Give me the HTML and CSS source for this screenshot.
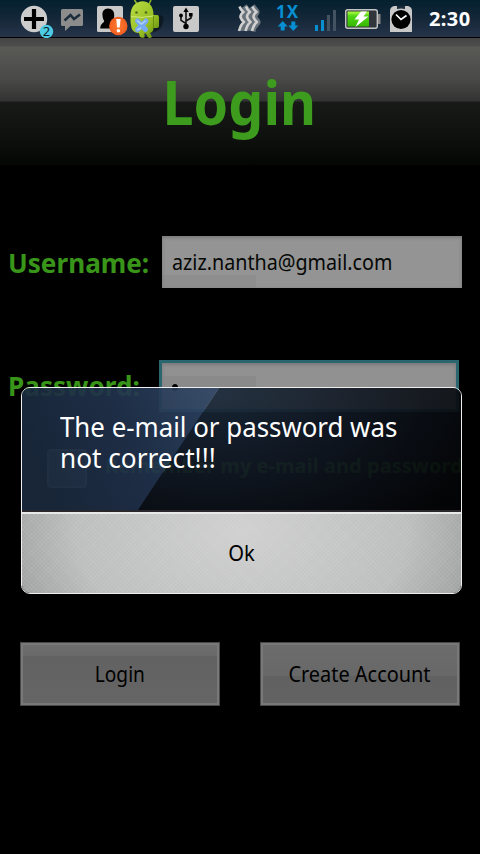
FILE: index.html
```
<!DOCTYPE html>
<html lang="en">
<head>
<meta charset="utf-8">
<title>Login</title>
<link rel="stylesheet" href="styles.css">
</head>
<body>
<div class="screen">
  <div class="status">
    <svg class="icons" width="420" height="38" viewBox="0 0 420 38" aria-hidden="true">
      <defs>
        <linearGradient id="bat" x1="0" x2="0" y1="0" y2="1"><stop offset="0" stop-color="#b4ff45"/><stop offset=".3" stop-color="#50d516"/><stop offset="1" stop-color="#35b800"/></linearGradient>
        <linearGradient id="bot" x1="0" x2="1" y1="0" y2="1"><stop offset="0" stop-color="#b8dc45"/><stop offset=".6" stop-color="#98c022"/><stop offset="1" stop-color="#5d8510"/></linearGradient>
        <radialGradient id="warn"><stop offset="0" stop-color="#ff7c31"/><stop offset="1" stop-color="#f15e20"/></radialGradient>
      </defs>
      <circle cx="34" cy="19" r="13.2" fill="#ccc"/>
      <path d="M34 9v20M24 19h20" stroke="#000" stroke-width="4.2"/>
      <circle cx="46.500" cy="31.500" r="6.700" fill="#4dcbe3"/>
      <path d="M61 10.500q0-1.500 1.500-1.500h19q1.500 0 1.500 1.500v14q0 1.500-1.500 1.500h-11l-5.500 5v-5h-2.500q-1.500 0-1.500-1.500z" fill="#8c8c8c"/>
      <path d="M64.500 20.500l6-5.500 3.500 4 6-4.500" fill="none" stroke="#1c2e3d" stroke-width="2.600"/>
      <rect x="97" y="6" width="26" height="26" rx="1.500" fill="#c9c9c9"/>
      <path d="M108 8.500c-4 0-6 3-5.500 7 .2 3 1 4 1.700 5.500 0 2-3.800 2-4 7.500h17c-.2-5.500-4.500-5.500-4.500-7.500 1-1.500 1.500-3 1.500-5.500.3-4-2-7-6.200-7z" fill="#000"/>
      <circle cx="118.300" cy="26" r="9.200" fill="url(#warn)"/>
      <path d="M116.200 19h4.400l-.9 8.500h-2.600z" fill="#fff"/><circle cx="118.400" cy="30.800" r="1.800" fill="#fff"/>
      <path d="M150 33q15-2 13-17l-4-1z" fill="#0a1319" opacity=".7"/>
      <path d="M137 4l-2.500-4M149 4l2-4" stroke="#91b52c" stroke-width="1.600"/>
      <path d="M130.500 16C130-3 154-4 153.500 15h3.500q2 0 2 2v9q0 2-2 2h-3.500q0 4-3.500 5l2 4q-2 1.500-4 .5l-2-4h-1.500v4q-3 .8-4.500-.5l-1-4q-6 0-7.500-5l-1-6z" fill="url(#bot)"/>
      <path d="M131 16.500q11 2 22-.5" fill="none" stroke="#d0e47b"/>
      <circle cx="136.500" cy="12.500" r="1.300" fill="#556b1c"/><circle cx="146" cy="12.500" r="1.300" fill="#556b1c"/>
      <path d="M153.500 16v12" stroke="#668c12"/>
      <path d="M137.500 21l8 8.500M146 21l-8.500 8.500" stroke="#77aaf2" stroke-width="5" stroke-linecap="round"/>
      <path d="M137 20.500l4.500 3.500 4.500-3.500M137 30l4-2" stroke="#b3d3fb" stroke-width="1.500" fill="none"/>
      <rect x="173" y="6" width="26" height="26" rx="2" fill="#c9c9c9"/>
      <g fill="none" stroke="#111" stroke-width="1.600"><path d="M186 26V11M186 23.500l-5-3.200V16M186 21l5-3v-3"/></g>
      <path d="M186 7.500l-2.600 4.500h5.200zM189 13h3.600v3.600h-3.600z"/><circle cx="181" cy="15.500" r="1.900"/><circle cx="186" cy="26.500" r="2.700"/>
      <path d="M243 7l4 5-3 5 4 5-4 5v4M251 7l4 5-3 5 4 5-4 5-1 4" fill="none" stroke="#68727a" stroke-width="9" stroke-linejoin="round"/>
      <path d="M239.500 6.500q1 3 4 5.500-3 2-3 5 1 3 3.500 5-3 2-5 9M246 6.500q1 3 4 5.500-3 2-3 5 1 3 3.500 5-3 2-5 9M252.500 6.500q1 3 4 5.500-3 2-3 5 1 3 3.500 5-3 2-5 9" fill="none" stroke="#d0d0d0" stroke-width="2.600" stroke-linejoin="round"/>
      <path d="M282.700 21l5 5.500h-3v4h-4v-4h-3zM293.300 31l-5-5.500h3v-4h4v4h3z" fill="#078fd2"/>
      <path d="M315 25h3v6h-3zM321 20h3v11h-3z" fill="#078fd2"/><path d="M327 15h3v16h-3zM333 10h3v21h-3z" fill="#445361"/>
      <rect x="345.700" y="9.700" width="31.600" height="18.600" rx="2" fill="#30363b" stroke="#c3c3c3" stroke-width="1.400"/>
      <path d="M378 14h2.500v10H378z" fill="#878787"/>
      <rect x="347.500" y="11.500" width="21.500" height="15" fill="url(#bat)"/>
      <path d="M361 11.500l-6.500 8h4.500l-3.500 7.500 13-10.500h-5l3.500-5z" fill="#fff"/>
      <path d="M390 32V11q0-4 4-5h14q4 1 4 5v21z" fill="#c9c9c9"/>
      <path d="M397 6h8v3q-4-1-8 0z" fill="#1a2c3a"/>
      <circle cx="401" cy="19.500" r="9.600" fill="#000"/>
      <path d="M396 14.500l5 5 5.500-4" stroke="#fff" stroke-width="1.700" fill="none"/>
    </svg>
    <span class="badge">2</span>
    <span class="net">1X</span>
    <span class="clock">2:30</span>
  </div>

  <header class="header"><h1 class="title"><span class="fit fit-title">Login</span></h1></header>

  <main class="form">
    <div class="row">
      <label class="label"><span class="fit fit-user">Username:</span></label>
      <div class="input input-user"><span class="fit fit-mail">aziz.nantha@gmail.com</span></div>
    </div>
    <div class="row row-pass">
      <label class="label label-pass"><span class="fit fit-pass">Password:</span></label>
      <div class="input input-focus"><span class="dot"></span></div>
    </div>
    <div class="remember"><span class="check"></span><span class="fit fit-rem">Remember my e-mail and password</span></div>
    <div class="actions">
      <div class="button button-login"><span class="fit fit-login">Login</span></div>
      <div class="button button-create"><span class="fit fit-create">Create Account</span></div>
    </div>
  </main>

  <section class="dialog">
    <div class="message"><p class="text"><span class="fit fit-l1">The e-mail or password was</span><br><span class="fit fit-l2">not correct!!!</span></p></div>
    <div class="ok"><span class="fit fit-ok">Ok</span></div>
  </section>
</div>
</body>
</html>
```
FILE: styles.css
```
* { box-sizing: border-box; }
body { margin: 0; background: #000; font-family: "Noto Sans", "Open Sans", sans-serif; }
.screen { position: relative; width: 480px; height: 854px; overflow: hidden; background: #000; }
.fit { display: inline-block; white-space: nowrap; transform-origin: 0 50%; }

.status { position: relative; display: flex; align-items: center; height: 38px; background: linear-gradient(#04202f, #142738 50%, #27344a); border-bottom: 1px solid #000; color: #fff; }
.icons { flex: none; }
.badge { position: absolute; left: 42px; top: 24px; width: 9px; font-size: 13px; line-height: 15px; text-align: center; color: #06222a; }
.net { position: absolute; left: 276px; top: 2px; font-size: 17px; font-weight: 700; line-height: 20px; letter-spacing: 1px; color: #078fd2; }
.clock { margin-left: 9px; font-size: 20px; font-weight: 700; line-height: 38px; letter-spacing: .4px; white-space: nowrap; }

.header { height: 128px; padding-top: 20px; text-align: center; background: linear-gradient(#444 0, #4d4d4c 8px, #595a56 9px, #4a4a49 40px, #333 63px, #181a18 64px, #0e110d 98px, #030602 127px, #000 128px); }
.title { margin: 0; font-size: 61px; line-height: 88px; font-weight: 700; color: #3d9c1e; }
.fit-title { transform-origin: 50% 50%; transform: translateX(-1px) scaleX(.91); }

.form { padding-top: 70px; }
.row { display: flex; height: 52px; }
.row-pass { margin-top: 72px; }
.label { flex: none; width: 162px; padding-left: 8px; font-size: 26px; line-height: 54px; font-weight: 700; color: #399519; }
.label-pass { width: 159px; line-height: 52px; }
.fit-user, .fit-pass { transform: scaleX(1.005); }
.input { width: 300px; padding-left: 10px; background: #949494; box-shadow: inset 0 2px 3px #7c7c7c, inset 0 0 4px #8a8a8a; font-size: 22px; line-height: 51px; color: #060806; }
.input-user { background: linear-gradient(#8e8e8e, #8e8e8e) 0 39px / 94px 13px no-repeat #949494; }
.fit-mail { transform: scaleX(.896); }
.input-focus { padding: 19px 0 0 10px; border: 3px solid #2b6570; background: linear-gradient(#8a8a8a, #8a8a8a) 0 13px / 94px 39px no-repeat #919191; line-height: 0; }
.dot { display: inline-block; width: 6px; height: 7px; border-radius: 50%; background: #000; }
.remember { display: flex; align-items: center; width: 462px; height: 40px; margin-top: 36px; padding-left: 47px; overflow: hidden; font-size: 20px; font-weight: 700; line-height: 24px; color: #2a7216; }
.check { flex: none; width: 40px; height: 39px; margin-right: 18px; border: 2px solid #666; border-radius: 4px; background: #444; }
.fit-rem { transform: translateY(-2px) scaleX(1.005); }
.actions { display: flex; gap: 40px; margin-top: 154px; padding-left: 20px; }
.button { width: 200px; height: 64px; border: 1px solid #484848; box-shadow: inset 0 0 0 2px #787878; font-size: 22px; line-height: 61px; text-align: center; color: #000; }
.button-login { background: linear-gradient(#6e6e6e, #696969 13px, #626262 13px, #656565); }
.button-create { background: linear-gradient(#6c6c6c, #686868 33px, #616161 33px, #636363); }
.fit-login, .fit-create, .fit-ok { transform-origin: 50% 50%; }
.fit-create { transform: translateX(-1px) scaleX(.905); }
.fit-login { transform: scaleX(.87); }
.fit-ok { transform: scaleX(.92); }

.dialog { position: absolute; left: 21px; top: 387px; width: 441px; height: 207px; border: 1px solid #eee; border-radius: 9px; overflow: hidden; }
.message { position: relative; height: 124px; padding: 23px 0 0 38px; border-bottom: 2px solid #29262c; }
.message::before { content: ""; position: absolute; inset: 0; clip-path: polygon(197px 0, 100% 0, 100% 100%, 116px 100%); background: radial-gradient(ellipse 290px 180px at 190px 0, #1a293ae8, #101722e8 50%, #040507e8); }
.message::after { content: ""; position: absolute; inset: 0; clip-path: polygon(0 0, 197px 0, 116px 100%, 0 100%); background: linear-gradient(65deg, #1a293deb 15%, #20314beb 55%, #304767e8 100%) 0 0 / 200px 100% no-repeat; }
.text { position: relative; z-index: 1; margin: 0; font-size: 27px; line-height: 31px; color: #fff; }
.fit-l1 { transform: scaleX(.957); }
.fit-l2 { transform: scaleX(.97); }
.ok { height: 81px; border-top: 2px solid #e8e8e8; background: repeating-linear-gradient(45deg, #ffffff0c 0 1px, transparent 1px 3px), repeating-linear-gradient(-45deg, #ffffff0c 0 1px, transparent 1px 3px), radial-gradient(ellipse 255px 180px at 50% 20%, #d0d0d0, #bdbebe 65%, #9a9b9b); font-size: 22px; line-height: 77px; text-align: center; color: #000; }
```
